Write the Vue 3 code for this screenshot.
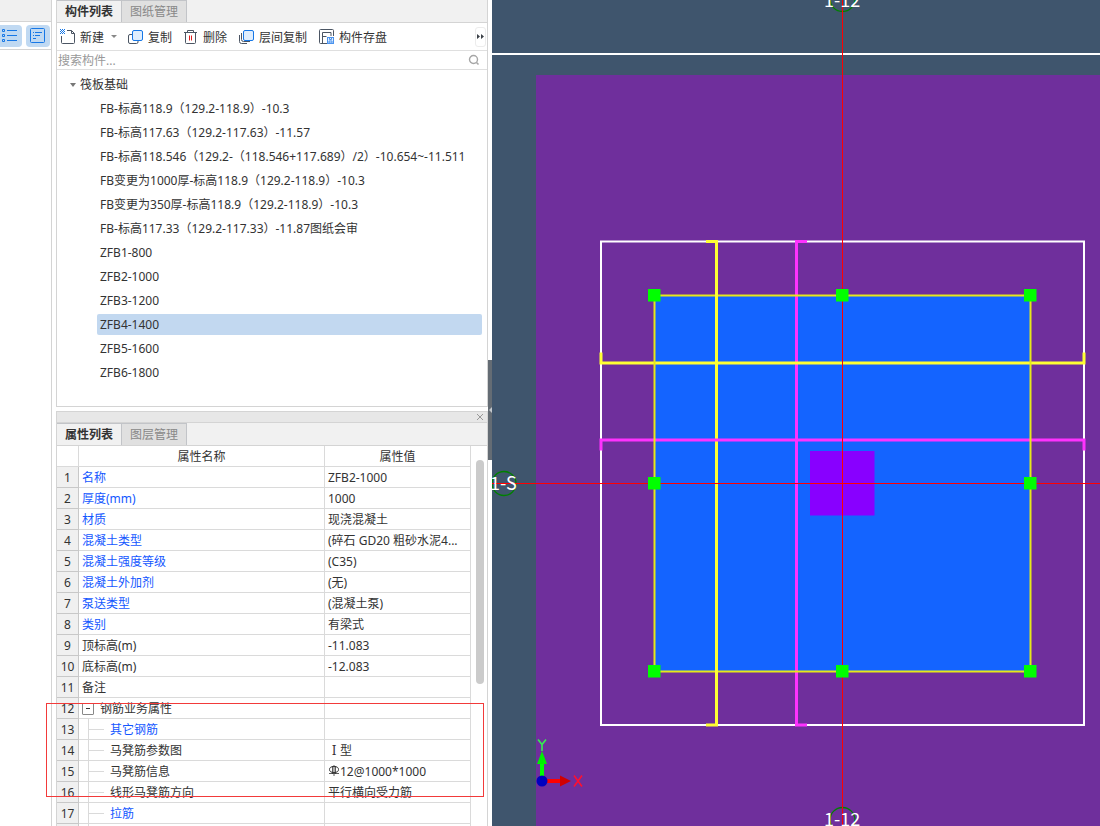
<script setup>
import { ref } from 'vue'

const keyword = ref('')
const selected = ref('ZFB4-1400')

const components = [
  'FB-标高118.9（129.2-118.9）-10.3',
  'FB-标高117.63（129.2-117.63）-11.57',
  'FB-标高118.546（129.2-（118.546+117.689）/2）-10.654~-11.511',
  'FB变更为1000厚-标高118.9（129.2-118.9）-10.3',
  'FB变更为350厚-标高118.9（129.2-118.9）-10.3',
  'FB-标高117.33（129.2-117.33）-11.87图纸会审',
  'ZFB1-800',
  'ZFB2-1000',
  'ZFB3-1200',
  'ZFB4-1400',
  'ZFB5-1600',
  'ZFB6-1800',
]

const properties = [
  { name: '名称', value: 'ZFB2-1000', blue: true },
  { name: '厚度(mm)', value: '1000', blue: true },
  { name: '材质', value: '现浇混凝土', blue: true },
  { name: '混凝土类型', value: '(碎石 GD20 粗砂水泥4...', blue: true },
  { name: '混凝土强度等级', value: '(C35)', blue: true },
  { name: '混凝土外加剂', value: '(无)', blue: true },
  { name: '泵送类型', value: '(混凝土泵)', blue: true },
  { name: '类别', value: '有梁式', blue: true },
  { name: '顶标高(m)', value: '-11.083' },
  { name: '底标高(m)', value: '-12.083' },
  { name: '备注', value: '' },
  { name: '钢筋业务属性', value: '', group: true },
  { name: '其它钢筋', value: '', blue: true, child: true },
  { name: '马凳筋参数图', roman: 'Ⅰ', value: '型', child: true },
  { name: '马凳筋信息', value: '12@1000*1000', child: true, rebar: true },
  { name: '线形马凳筋方向', value: '平行横向受力筋', child: true },
  { name: '拉筋', value: '', blue: true, child: true },
]

const handles = [
  [654, 295], [842, 295], [1030, 295],
  [654, 483], [1030, 483],
  [654, 671], [842, 671], [1030, 671],
]
</script>

<template>
  <div class="app">
    <aside class="strip">
      <div class="strip-head"></div>
      <div class="strip-tools">
        <button class="mode first" type="button" aria-label="列表">
          <svg width="22" height="22" viewBox="0 0 22 22" fill="none" stroke="#1677e6">
            <path d="M2.5 4.5h2v2h-2zM2.5 9.5h2v2h-2zM2.5 14.5h2v2h-2zM7 5.5h10M7 10.5h10M7 15.5h10" />
          </svg>
        </button>
        <button class="mode" type="button" aria-label="属性">
          <svg width="24" height="22" viewBox="0 0 24 22" fill="none" stroke="#1677e6">
            <rect x="4.5" y="3.5" width="14" height="14" rx="1" />
            <path d="M7 7.5h1M9 7.5h7M7 10.5h1M9 10.5h5M7 13.5h3" />
          </svg>
        </button>
      </div>
    </aside>

    <main class="docks">
      <section class="panel list-panel">
        <nav class="tabs">
          <button class="tab active" type="button">构件列表</button>
          <button class="tab" type="button">图纸管理</button>
        </nav>
        <div class="toolbar">
          <button class="tool" type="button">
            <svg width="16" height="16" viewBox="0 0 16 16" fill="none" stroke="#4b5563">
              <path d="M7 1.5h4.5l3 3v9a1 1 0 0 1-1 1h-11a1 1 0 0 1-1-1V7M11.5 1.5v3h3" />
              <path d="M0 .5h5M0 2.5h5M0 4.5h5" stroke="#1677e6" stroke-dasharray="1 1" />
              <path d="M1 1.5h4M1 3.5h4" stroke="#1677e6" stroke-dasharray="1 1" />
            </svg>
            <span>新建</span>
          </button>
          <span class="caret"></span>
          <button class="tool copy" type="button">
            <svg width="16" height="16" viewBox="0 0 16 16" fill="none" stroke="#4b5563">
              <path d="M4 5.5H2A1.5 1.5 0 0 0 .5 7v6A1.5 1.5 0 0 0 2 14.5h6.500A1.5 1.5 0 0 0 10 13v-1.500" />
              <rect x="4.5" y="1.5" width="10" height="10" rx="1.5" fill="#dfeefe" stroke="#1677e6" />
            </svg>
            <span>复制</span>
          </button>
          <button class="tool trash" type="button">
            <svg width="16" height="16" viewBox="0 0 16 16" fill="none" stroke="#4b5563">
              <path d="M1 3.5h13M4.5 3.5v-2h6v2M2.5 4v9.500a1 1 0 0 0 1 1h8a1 1 0 0 0 1-1V4" />
              <path d="M6.5 6.500v5M8.500 6.500v5" stroke="#e02020" />
            </svg>
            <span>删除</span>
          </button>
          <button class="tool layers" type="button">
            <svg width="16" height="16" viewBox="0 0 16 16" fill="none" stroke="#4b5563">
              <path d="M.5 6v6.500a2 2 0 0 0 2 2H8M2.500 4v6.500a2 2 0 0 0 2 2H11" />
              <rect x="4.5" y="1.5" width="10" height="10" rx="1.5" fill="#dfeefe" stroke="#1677e6" />
            </svg>
            <span>层间复制</span>
          </button>
          <button class="tool save" type="button">
            <svg width="16" height="16" viewBox="0 0 16 16" fill="none" stroke="#4b5563">
              <path d="M8 14.5H1.500a1 1 0 0 1-1-1v-12a1 1 0 0 1 1-1h12a1 1 0 0 1 1 1V7M3.500 14V3.500H12V7M3.500 7.500h4" />
              <rect x="8.5" y="8.5" width="6" height="6" fill="#dfeefe" stroke="#4b93ee" />
              <path d="M10 12h3v2h-3zM10.500 9v1.500h2V9" stroke="#4b93ee" />
            </svg>
            <span>构件存盘</span>
          </button>
          <button class="more" type="button" aria-label="更多">
            <svg width="7" height="5" viewBox="0 0 7 5" fill="#3c4148"><path d="M0 0l3 2.500L0 5zM4 0l3 2.500L4 5z" /></svg>
          </button>
        </div>
        <label class="search">
          <input v-model="keyword" type="text" placeholder="搜索构件..." aria-label="搜索构件" />
          <svg width="12" height="12" viewBox="0 0 12 12" fill="none" stroke="#a6a6a6">
            <circle cx="5.5" cy="5.5" r="4" stroke-width="1.4" /><path d="M8.500 8.500l2 2" stroke-width="1.6" />
          </svg>
        </label>
        <div class="tree">
          <button class="root" type="button"><i class="fold"></i>筏板基础</button>
          <button
            v-for="c in components"
            :key="c"
            type="button"
            class="leaf"
            :class="{ on: c === selected }"
            @click="selected = c"
          >{{ c }}</button>
        </div>
      </section>

      <section class="panel prop-panel">
        <header class="titlebar">
          <button type="button" aria-label="关闭">
            <svg width="8" height="8" viewBox="0 0 8 8" stroke="#999" fill="none"><path d="M1 1l6 6M7 1L1 7" /></svg>
          </button>
        </header>
        <nav class="tabs">
          <button class="tab active" type="button">属性列表</button>
          <button class="tab" type="button">图层管理</button>
        </nav>
        <div class="grid-wrap">
          <table class="props">
            <colgroup><col class="c-no" /><col class="c-name" /><col class="c-val" /></colgroup>
            <thead>
              <tr><th></th><th>属性名称</th><th>属性值</th></tr>
            </thead>
            <tbody>
              <tr v-for="(p, i) in properties" :key="i">
                <td class="no">{{ i + 1 }}</td>
                <td class="name" :class="{ blue: p.blue, child: p.child, group: p.group }">
                  <button v-if="p.group" class="minus" type="button" aria-label="折叠"></button>{{ p.name }}
                </td>
                <td class="val">
                  <svg v-if="p.rebar" class="rebar" width="10" height="11" viewBox="0 0 10 11" fill="none" stroke="#333">
                    <path d="M5 0v11M3.500 1v8M6.500 1v8M0 8.500h10" stroke-width=".8" /><ellipse cx="5" cy="4.5" rx="4.500" ry="3" />
                  </svg><span v-if="p.roman" class="roman">{{ p.roman }}</span>{{ p.value }}
                </td>
              </tr>
              <tr>
                <td class="no"></td>
                <td class="name child"></td>
                <td class="val"></td>
              </tr>
            </tbody>
          </table>
          <div class="scroll"><div class="thumb"></div></div>
        </div>
      </section>
    </main>

    <div class="splitter">
      <button type="button" aria-label="收起">
        <svg width="3" height="6" viewBox="0 0 3 6" fill="#c3c8cc"><path d="M3 0v6L0 3z" /></svg>
      </button>
    </div>

    <section class="viewport">
      <svg class="scene" viewBox="492 0 608 826" preserveAspectRatio="xMinYMin slice">
        <rect x="492" y="0" width="608" height="826" fill="#3f556d" />
        <rect x="536" y="75" width="564" height="751" fill="#6f2f9c" />
        <path d="M492 54H1100" stroke="#fff" stroke-width="2" />
        <rect x="654" y="295" width="376" height="376" fill="#1464ff" />
        <rect x="601" y="241.5" width="483" height="483.5" fill="none" stroke="#fff" stroke-width="2" />
        <rect x="810" y="451" width="64.5" height="64.5" fill="#8800ff" />
        <g fill="none" stroke-width="3">
          <path d="M706 241.5H716.500V725H706" stroke="#ffff32" />
          <path d="M807 241.5H796.500V725H807" stroke="#ff32ff" />
          <path d="M601 352.5V363H1084V352.500" stroke="#ffff32" />
          <path d="M601 450.5V440H1084V450.500" stroke="#ff32ff" />
        </g>
        <rect x="654.5" y="295.5" width="376" height="376" fill="none" stroke="#e6e81a" stroke-width="2" />
        <path d="M716.5 290V302M716.500 665V677" stroke="#ffff32" stroke-width="3" />
        <g fill="none" stroke="#008000" stroke-width="1.3">
          <circle cx="842.5" cy="-1" r="12.5" />
          <circle cx="842.5" cy="820" r="12.5" />
          <circle cx="504" cy="483.5" r="12" />
        </g>
        <path d="M842.5 0V826" stroke="#ff0000" />
        <path d="M492 483.5H1100" stroke="#ff0000" />
        <rect v-for="(h, i) in handles" :key="i" :x="h[0] - 6" :y="h[1] - 6" width="12.5" height="12.5" fill="#00ff00" />
        <g class="axis-label">
          <text x="824" y="7">1-12</text>
          <text x="824" y="826">1-12</text>
          <text x="490" y="490">1-S</text>
        </g>
        <path d="M542 776V764" stroke="#00ff00" stroke-width="4" />
        <path d="M542 751l5 13h-10z" fill="#00f000" />
        <path d="M547 781h13" stroke="#ff0000" stroke-width="4" />
        <path d="M571 781l-11 5.500v-11z" fill="#d00000" />
        <circle cx="542" cy="781" r="5.5" fill="#0000c0" />
        <path d="M538 739.500l4 5v6.500M546 739.500l-4 5" fill="none" stroke="#32f050" stroke-width="1.6" />
        <path d="M574 775.500l8 11M582 775.500l-8 11" fill="none" stroke="#ff1030" stroke-width="1.6" />
      </svg>
    </section>

    <div class="marker"></div>
  </div>
</template>

<style>
html,
body {
  height: 100%;
}
body {
  margin: 0;
}
#app {
  height: 100%;
}
</style>

<style scoped>
.app {
  position: relative;
  display: grid;
  grid-template-columns: 56px 432px 4px minmax(0, 1fr);
  grid-template-rows: minmax(0, 1fr);
  height: 100%;
  overflow: hidden;
  background: #fff;
  color: #333;
  font: 12px/20px "Noto Sans", "Noto Sans CJK SC", sans-serif;
}
.app * {
  box-sizing: border-box;
}
button {
  margin: 0;
  padding: 0;
  border: 0;
  background: none;
  color: inherit;
  font: inherit;
}
svg {
  display: block;
  flex: none;
}
.strip {
  display: flex;
  flex-direction: column;
  margin-right: 4px;
  border-right: 1px solid #d4d4d4;
}
.strip-head {
  height: 22px;
  background: #f0f0f0;
  border-bottom: 1px solid #d4d4d4;
}
.strip-tools {
  display: flex;
  gap: 4px;
  height: 28px;
  padding-top: 3px;
  border-bottom: 1px solid #d4d4d4;
}
.mode {
  width: 24px;
  height: 22px;
  border-radius: 4px;
  background: #c0d9f2;
}
.mode.first {
  width: 22px;
  border-radius: 0 4px 4px 0;
}
.docks {
  display: flex;
  flex-direction: column;
  gap: 4px;
  min-height: 0;
}
.panel {
  border: solid #d4d4d4;
  border-width: 0 1px;
}
.list-panel {
  flex: none;
  border-bottom-width: 1px;
}
.prop-panel {
  display: flex;
  flex: 1;
  flex-direction: column;
  min-height: 0;
  overflow: hidden;
  border-top-width: 1px;
}
.tabs {
  display: flex;
  flex: none;
  height: 23px;
  background: #f1f1f1;
  border-bottom: 1px solid #d4d4d4;
}
.tab {
  width: 65px;
  border: solid #c2c4c8;
  border-width: 1px 1px 0 0;
  background: #e0e0e0;
  color: #888;
}
.tab.active {
  background: #f1f1f1;
  color: #333;
  font-weight: 700;
}
.toolbar {
  display: flex;
  align-items: center;
  height: 28px;
  padding-left: 3px;
  border-bottom: 1px solid #dfdfdf;
}
.tool {
  display: flex;
  align-items: center;
  gap: 4px;
  white-space: nowrap;
}
.tool span {
  padding-top: 2px;
}
.caret {
  margin-left: 7px;
  border: solid transparent;
  border-width: 3px 3px 0;
  border-top-color: #888;
}
.copy,
.trash {
  margin-left: 11px;
}
.layers,
.save {
  margin-left: 12px;
}
.more {
  display: flex;
  align-items: center;
  justify-content: center;
  width: 11px;
  height: 20px;
  margin: 0 1px 0 auto;
  border: 1px solid #ececec;
  border-radius: 3px;
}
.search {
  display: flex;
  align-items: center;
  height: 19px;
  padding: 0 7px 0 1px;
  border-bottom: 1px solid #dfdfdf;
}
.search input {
  flex: 1;
  min-width: 0;
  height: 18px;
  padding: 2px 0 0;
  border: 0;
  outline: 0;
  background: none;
  color: inherit;
  font: inherit;
}
.search input::placeholder {
  color: #999;
}
.tree {
  display: flex;
  flex-direction: column;
  gap: 3px;
  padding: 4px 5px 23px 13px;
}
.root,
.leaf {
  height: 21px;
  text-align: left;
  white-space: nowrap;
}
.root {
  display: flex;
  align-items: center;
  gap: 4px;
}
.fold {
  border: solid transparent;
  border-width: 4px 3px 0;
  border-top-color: #777;
}
.leaf {
  margin-left: 27px;
  padding-left: 3px;
  border-radius: 2px;
}
.leaf.on {
  background: #c2d8f0;
}
.titlebar {
  display: flex;
  flex: none;
  align-items: center;
  justify-content: flex-end;
  height: 11px;
  padding-right: 3px;
  background: #e7e7e7;
  border-bottom: 1px solid #d4d4d4;
}
.grid-wrap {
  display: flex;
  min-height: 0;
}
.props {
  flex: 1;
  width: 100%;
  border-collapse: separate;
  border-spacing: 0;
  table-layout: fixed;
}
.c-no {
  width: 22px;
}
.c-name {
  width: 246px;
}
th,
td {
  height: 21px;
  padding: 2px 0 0;
  overflow: hidden;
  border: solid #dadada;
  border-width: 0 1px 1px 0;
  font-weight: 400;
  line-height: 18px;
  white-space: nowrap;
}
.no {
  background: #f0f0f0;
  border-color: #c8c8c8;
  text-align: center;
}
.name {
  padding-left: 3px;
}
.blue {
  color: #1457ff;
}
.minus {
  position: relative;
  width: 12px;
  height: 12px;
  margin-right: 6px;
  border: 1px solid #888;
  border-radius: 1px;
  vertical-align: -1px;
}
.minus::after {
  position: absolute;
  top: 4px;
  left: 3px;
  width: 4px;
  height: 1px;
  background: #333;
  content: "";
}
.child {
  padding-left: 31px;
  background:
    linear-gradient(#dadada, #dadada) 9px 0 / 1px 20px no-repeat,
    linear-gradient(#dadada, #dadada) 9px 10px / 16px 1px no-repeat;
}
.val {
  padding-left: 3px;
}
.rebar {
  display: inline-block;
  margin: 0 1px;
  vertical-align: 0;
}
.roman {
  display: inline-block;
  width: 12px;
  font-family: "Liberation Serif", "DejaVu Serif", serif;
  text-align: center;
}
.scroll {
  flex: none;
  width: 16px;
  padding: 14px 3px 0 5px;
}
.thumb {
  height: 224px;
  border-radius: 4px;
  background: #cbcbcb;
}
.splitter {
  padding-top: 360px;
}
.splitter button {
  display: flex;
  align-items: center;
  justify-content: flex-end;
  width: 4px;
  height: 100px;
  background: #646c74;
}
.viewport {
  min-width: 0;
  overflow: hidden;
  background: #3f556d;
}
.scene {
  width: 100%;
  height: 100%;
}
.axis-label {
  fill: #fff;
  font: 18px "Noto Sans CJK SC", sans-serif;
}
.marker {
  position: absolute;
  top: 703px;
  left: 46px;
  width: 438px;
  height: 94px;
  border: 1px solid #f23a3a;
}
</style>
